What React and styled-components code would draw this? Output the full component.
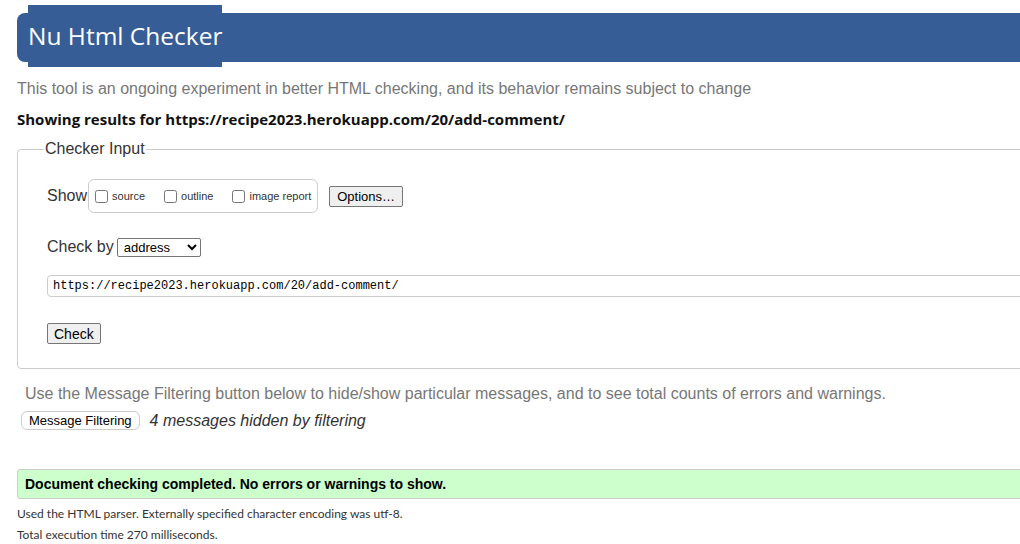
import React from 'react';
import styled, { createGlobalStyle } from 'styled-components';

const GlobalStyle = createGlobalStyle`
  html, body {
    margin: 0;
    padding: 0;
    background: #fff;
    overflow: hidden;
  }
  body {
    font-family: "Liberation Sans", Arial, sans-serif;
    color: #333;
  }
`;

const Page = styled.div`
  width: 1100px;
  padding: 13px 0 0 17px;
`;

const Header = styled.h1`
  display: flex;
  height: 49px;
  margin: 0;
  background: #365d95;
  border-radius: 8px 0 0 8px;
`;

const Title = styled.span`
  align-self: flex-start;
  margin: -8px 0 0 11px;
  height: 62px;
  line-height: 62px;
  background: #365d95;
  color: #fff;
  font-family: "Open Sans", sans-serif;
  font-size: 24.5px;
  font-weight: 400;
`;

const Tagline = styled.p`
  margin: 17px 0 0;
  line-height: 20px;
  font-size: 16px;
  color: #777;
`;

const Results = styled.p`
  margin: 10px 0 0;
  line-height: 20px;
  font-family: "Open Sans", sans-serif;
  font-size: 15px;
  font-weight: 700;
  color: #111;
`;

const Fieldset = styled.fieldset`
  margin: 10px 0 0;
  padding: 0 0 24px 29px;
  border: 1px solid #ccc;
  border-radius: 4px 0 0 4px;
`;

const Legend = styled.legend`
  margin-left: -3px;
  padding: 0 1px;
  line-height: 20px;
  font-size: 16px;
  color: #333;
`;

const Row = styled.div`
  display: flex;
  align-items: center;
  margin-top: ${(p) => p.$top}px;
  height: ${(p) => p.$height}px;
  font-size: 16px;
  color: #333;
`;

const OptionBox = styled.div`
  display: flex;
  align-items: center;
  height: 32px;
  margin-left: 1px;
  padding: 0 6px 0 5px;
  border: 1px solid #ccc;
  border-radius: 6px;
`;

const CheckLabel = styled.label`
  display: flex;
  align-items: center;
  font-size: 11px;
  color: #333;
  margin-right: ${(p) => (p.$last ? 0 : 18)}px;

  input {
    width: 13px;
    height: 13px;
    margin: 0 4px 0 1px;
  }
`;

const NativeButton = styled.button`
  height: ${(p) => p.$height || 21}px;
  margin-left: ${(p) => p.$left || 0}px;
  padding: 0 ${(p) => p.$pad || 6}px;
  font-family: "Liberation Sans", Arial, sans-serif;
  font-size: ${(p) => p.$size || 13}px;
  color: #000;
  background: #efefef;
  border: 1px solid #767676;
  border-radius: 2px;
`;

const Select = styled.select`
  width: 84px;
  height: 19px;
  margin-left: 3px;
  padding: 0 0 0 2px;
  font-family: "Liberation Sans", Arial, sans-serif;
  font-size: 13px;
  color: #000;
  border: 1px solid #767676;
  border-radius: 2px;
  background: #fff;
`;

const UrlInput = styled.input`
  display: block;
  box-sizing: border-box;
  width: 1040px;
  height: 22px;
  margin-top: 18px;
  padding: 0 5px;
  font-family: "Liberation Mono", "Courier New", monospace;
  font-size: 12px;
  color: #000;
  border: 1px solid #ccc;
  border-radius: 4px;
`;

const CheckWrap = styled.div`
  margin-top: 26px;
`;

const Note = styled.p`
  margin: 15px 0 0 8px;
  line-height: 20px;
  font-size: 16px;
  color: #777;
`;

const FilterRow = styled.div`
  display: flex;
  align-items: center;
  gap: 10px;
  margin: 7px 0 0 4px;
`;

const FilterButton = styled.button`
  height: 19px;
  padding: 0 7px;
  font-family: "Liberation Sans", Arial, sans-serif;
  font-size: 13px;
  color: #000;
  background: #fff;
  border: 1px solid #ccc;
  border-radius: 6px;
`;

const Hidden = styled.em`
  font-size: 16px;
  color: #333;
`;

const Success = styled.div`
  box-sizing: border-box;
  height: 30px;
  margin-top: 39px;
  padding-left: 7px;
  display: flex;
  align-items: center;
  background: #ccffcc;
  border: 1px solid #ccc;
  border-radius: 3px 0 0 3px;
  font-size: 14px;
  font-weight: 700;
  color: #000;
`;

const Details = styled.div`
  margin-top: 4px;
  font-family: Lato, sans-serif;
  font-size: 12px;
  line-height: 21px;
  color: #333;
`;

export default function App() {
  return (
    <>
      <GlobalStyle />
      <Page>
        <Header>
          <Title>Nu Html Checker</Title>
        </Header>
        <Tagline>
          This tool is an ongoing experiment in better HTML checking, and its behavior remains subject to change
        </Tagline>
        <Results>Showing results for https://recipe2023.herokuapp.com/20/add-comment/</Results>

        <Fieldset>
          <Legend>Checker Input</Legend>
          <Row $top={20} $height={34}>
            Show
            <OptionBox>
              <CheckLabel>
                <input type="checkbox" />
                source
              </CheckLabel>
              <CheckLabel>
                <input type="checkbox" />
                outline
              </CheckLabel>
              <CheckLabel $last>
                <input type="checkbox" />
                image report
              </CheckLabel>
            </OptionBox>
            <NativeButton $left={11} $pad={7}>Options…</NativeButton>
          </Row>
          <Row $top={24} $height={20}>
            Check by
            <Select defaultValue="address">
              <option value="address">address</option>
              <option value="upload">file upload</option>
              <option value="textarea">text input</option>
            </Select>
          </Row>
          <UrlInput defaultValue="https://recipe2023.herokuapp.com/20/add-comment/" />
          <CheckWrap>
            <NativeButton $size={14}>Check</NativeButton>
          </CheckWrap>
        </Fieldset>

        <Note>
          Use the Message Filtering button below to hide/show particular messages, and to see total counts of errors and warnings.
        </Note>
        <FilterRow>
          <FilterButton>Message Filtering</FilterButton>
          <Hidden>4 messages hidden by filtering</Hidden>
        </FilterRow>

        <Success>Document checking completed. No errors or warnings to show.</Success>

        <Details>
          <div>Used the HTML parser. Externally specified character encoding was utf-8.</div>
          <div>Total execution time 270 milliseconds.</div>
        </Details>
      </Page>
    </>
  );
}
